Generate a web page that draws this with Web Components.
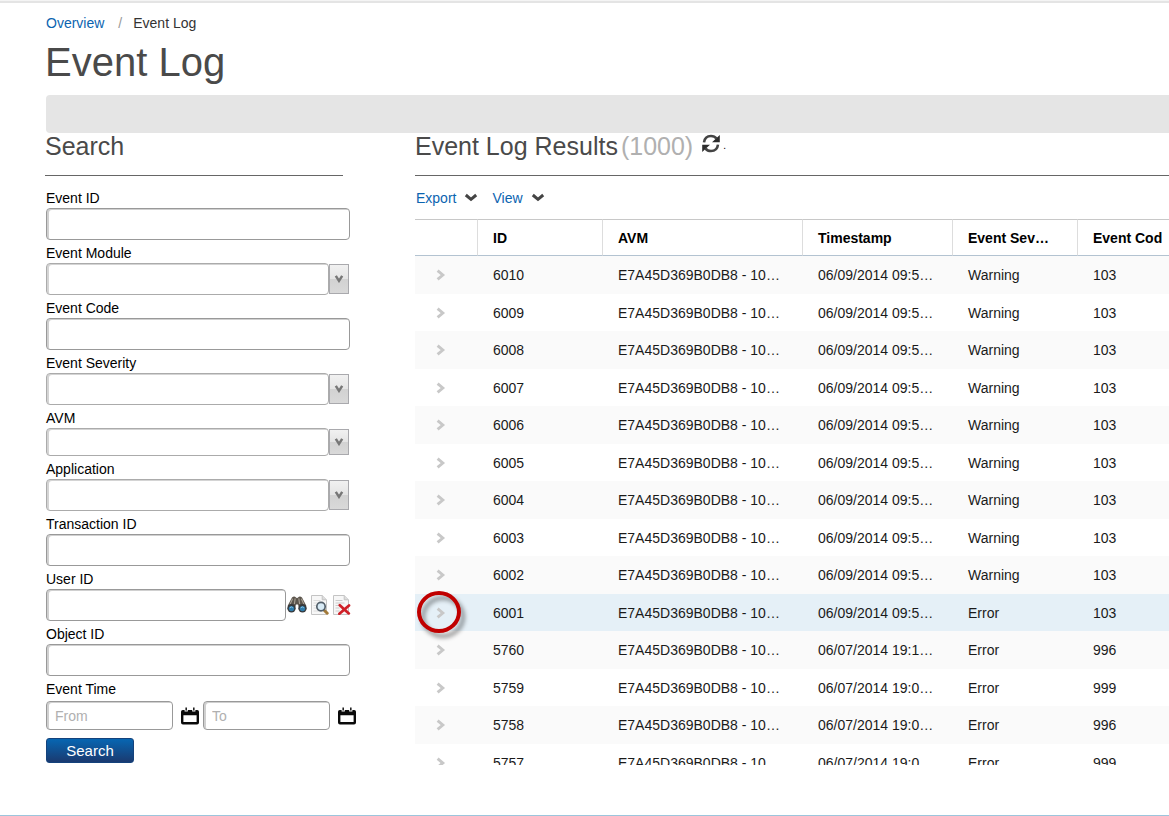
<!DOCTYPE html>
<html lang="en">
<head>
<meta charset="utf-8">
<title>Event Log</title>
<style>
  body { margin: 0; background: #fff; color: #1a1a1a; font: 14px/20px "Liberation Sans", Arial, sans-serif; overflow-x: hidden; }
</style>
</head>
<body>
<log-page>
  <page-heading slot="head" parent="Overview">Event Log</page-heading>
  <search-panel slot="side"></search-panel>
  <results-panel slot="main" total="1000"></results-panel>
</log-page>

<script>
const define = (name, html, setup) => {
  const template = document.createElement('template');
  template.innerHTML = html;
  customElements.define(name, class extends HTMLElement {
    constructor() {
      super();
      this.attachShadow({ mode: 'open' });
    }
    connectedCallback() {
      if (this.shadowRoot.childNodes.length) return;
      this.shadowRoot.append(template.content.cloneNode(true));
      if (setup) setup(this, this.shadowRoot);
    }
  });
};

/* ---- icons ---- */
const icons = {
  down: [14, 10, '<path d="M1.8 2 7 6.4 12.2 2" fill="none" stroke="#444" stroke-width="3"/>'],
  expand: [10, 12, '<path d="M1.6 1.6 6.8 6 1.6 10.4" fill="none" stroke="#c8c8c8" stroke-width="2.9"/>'],
  drop: [10, 8, '<path d="M1.8.8 5 5.8 8.2.8" fill="none" stroke="#777" stroke-width="2.5"/>'],
  refresh: [18, 19, '<g fill="none" stroke="#444" stroke-width="2.6"><path d="M2 8.4C2.6 4 5.6 2 9 2c2.4 0 4.2.8 5.4 2.4"/><path d="M16 10.6c-.6 4.4-3.6 6.4-7 6.4-2.4 0-4.2-.8-5.4-2.4"/></g><path d="M17.8 1V8.2H10ZM.2 18v-7.2h7.8Z" fill="#2c2c2c"/>'],
  calendar: [18, 18, '<path d="M1.8 3H3.6V4.6H6.8V3H11.2V4.6H14.4V3H16.2Q18 3 18 4.8V15.4Q18 17.4 16 17.4H2Q0 17.4 0 15.4V4.8Q0 3 1.8 3ZM2.4 8.2V15H15.6V8.2Z" fill="#0a0a0a"/><path d="M4.4.6h1.6v3H4.4ZM12 .6h1.6v3H12Z" fill="#222"/>'],
  binoculars: [20, 20, '<path d="M5 2.6Q7 .4 9 2.4L10 3.2 11 2.4Q13 .4 15 2.6L19.2 10.6 18 13H12.2L11 9.6H9L7.8 13H2L.8 10.6Z" fill="#5c554c"/><path d="M5.6 3.8 3 9.4M8.2 3.4 7.4 9M14.4 3.8 17 9.4M11.8 3.4 12.6 9" stroke="#aaa397" stroke-width="1.1" fill="none"/><circle cx="4.5" cy="13.2" r="4.2" fill="#38393b"/><circle cx="15.5" cy="13.2" r="4.2" fill="#38393b"/><circle cx="4.5" cy="13.6" r="2.7" fill="#2e7baa"/><circle cx="15.5" cy="13.6" r="2.7" fill="#2e7baa"/><path d="M2.8 12.8q1.6-1.8 3 0M13.8 12.8q1.6-1.8 3 0" stroke="#8ec5e4" fill="none"/>'],
  preview: [20, 20, '<path d="M2.5.5H13.2L17.5 4.8V19.5H2.5Z" fill="#f7f7f7" stroke="#c4c4c4"/><path d="M13.2.5V4.8H17.5" fill="#ddd" stroke="#c4c4c4"/><path d="M4.5 5.5h7M4.5 8h4M4.5 10.5h2.5M4.5 13h2.5M4.5 16h7" stroke="#ddd"/><path d="m15.2 15.2 3 3" stroke="#a27a39" stroke-width="3" stroke-linecap="round"/><circle cx="12" cy="11.6" r="4.2" fill="#d8ebf6" stroke="#53606b" stroke-width="1.7"/>'],
  clear: [20, 20, '<path d="M2.5.5H13.2L17.5 4.8V19.5H2.5Z" fill="#f7f7f7" stroke="#c4c4c4"/><path d="M13.2.5V4.8H17.5" fill="#ddd" stroke="#c4c4c4"/><path d="M4.5 5.5h7M4.5 8h9M4.5 10.5h4M4.5 13h4M4.5 16h4" stroke="#ccc"/><path d="m8.8 10.2 9 8.2M18 10.4l-9.6 8.4" stroke="#cf1f27" stroke-width="2.7" stroke-linecap="round"/>'],
};
define('ui-icon', `<style>:host{display:inline-flex;flex:none}svg{display:block}</style>`, (el, root) => {
  const [w, h, art] = icons[el.getAttribute('name')];
  root.innerHTML += `<svg width="${w}" height="${h}" viewBox="0 0 ${w} ${h}" aria-hidden="true">${art}</svg>`;
});

const control = `
  label { display: block; color: #000; }
  input { box-sizing: border-box; width: 100%; height: 32px; margin: 0; padding: 0 8px; border: 1px solid #999; border-radius: 4px;
    background: #fff; box-shadow: inset 2px 1px 0 #d0d0d0; font: inherit; outline-offset: 1px; display: block; min-width: 0; }
  input::placeholder { color: #b0b0b0; opacity: 1; }
  button { font: inherit; border: 0; background: none; padding: 0; margin: 0; cursor: pointer; display: flex; align-items: center; }`;

/* ---- labelled text box, with room for buttons beside it ---- */
define('text-field', `<style>${control}
  :host { display: block; }
  .row { display: flex; align-items: center; gap: 1px; }
</style><label for="box"></label><div class="row"><input id="box" type="text"><slot></slot></div>`, (el, root) => {
  root.querySelector('label').textContent = el.getAttribute('label');
});

/* ---- labelled drop-down ---- */
define('combo-field', `<style>${control}
  :host { display: block; --h: 32px; }
  :host([compact]) { --h: 28px; }
  .combo { display: grid; grid-template-columns: 1fr 20px; height: var(--h); margin-right: 1px; }
  .combo > * { grid-row: 1; box-sizing: border-box; }
  .face { grid-column: 1; border: 1px solid #ababab; border-radius: 4px; box-shadow: inset 2px 1px 0 #d4d4d4; }
  .arrow { grid-column: 2; margin: 1px 0; border: 1px solid #a9a9ad; display: flex; align-items: center; justify-content: center;
    background: linear-gradient(#f1f1f1, #e4e4e4 50%, #d2d2d2 50%, #d9d9d9); }
  select { grid-column: 1 / -1; appearance: none; width: 100%; border: 0; background: none; padding: 0 28px 0 8px; margin: 0; font: inherit; }
</style><label for="list"></label>
<div class="combo"><span class="face"></span><span class="arrow"><ui-icon name="drop"></ui-icon></span><select id="list"><option></option></select></div>`,
(el, root) => {
  root.querySelector('label').textContent = el.getAttribute('label');
});

/* ---- from / to range ---- */
define('time-range', `<style>${control}
  :host { display: block; }
  fieldset { border: 0; margin: 0; padding: 0; min-width: 0; }
  legend { padding: 0; color: #000; }
  .row { display: flex; gap: 4px; padding-top: 2px; }
  .date { display: flex; gap: 8px; flex: 1; }
  input { height: 29px; flex: 1; }
</style><fieldset><legend>Event Time</legend><div class="row">
  <div class="date"><input placeholder="From" aria-label="From"><button type="button" aria-label="Pick start date"><ui-icon name="calendar"></ui-icon></button></div>
  <div class="date"><input placeholder="To" aria-label="To"><button type="button" aria-label="Pick end date"><ui-icon name="calendar"></ui-icon></button></div>
</div></fieldset>`);

define('section-title', `<style>
  :host { display: block; border-bottom: 1px solid #666; padding-bottom: 16px; }
  .row { display: flex; height: 26px; }
  h2 { margin: 0; font-weight: 400; font-size: 25px; line-height: 26px; color: #4a4a4a; }
</style><div class="row"><h2><slot></slot></h2><slot name="extra"></slot></div>`);

define('search-panel', `<style>${control}
  :host { display: block; }
  section-title { margin-right: 13px; }
  form { display: flex; flex-direction: column; gap: 3px; padding: 12px 0 0 1px; }
  .fit { margin-right: 6px; }
  .tools { display: flex; gap: 2px; margin-right: -1px; }
  .tools button { width: 20px; }
  .go { align-self: flex-start; justify-content: center; width: 88px; height: 25px; margin-top: 5px; border: 1px solid #14427c; border-radius: 3px;
    background: linear-gradient(#0766b2, #1a3a70); color: #fff; font-size: 15px; line-height: 20px; }
</style>
<section-title>Search</section-title>
<form>
  <text-field class="fit" label="Event ID"></text-field>
  <combo-field class="fit" label="Event Module"></combo-field>
  <text-field class="fit" label="Event Code"></text-field>
  <combo-field class="fit" label="Event Severity"></combo-field>
  <combo-field class="fit" label="AVM" compact></combo-field>
  <combo-field class="fit" label="Application"></combo-field>
  <text-field class="fit" label="Transaction ID"></text-field>
  <text-field class="fit" label="User ID"><div class="tools">
    <button type="button" aria-label="Find user"><ui-icon name="binoculars"></ui-icon></button>
    <button type="button" aria-label="View user"><ui-icon name="preview"></ui-icon></button>
    <button type="button" aria-label="Clear user"><ui-icon name="clear"></ui-icon></button></div></text-field>
  <text-field class="fit" label="Object ID"></text-field>
  <time-range></time-range>
  <button class="go" type="button">Search</button>
</form>`);

/* ---- results ---- */
const avm = 'E7A45D369B0DB8 - 10…';
const rows = [6010, 6009, 6008, 6007, 6006, 6005, 6004, 6003, 6002].map(id => [id, avm, '06/09/2014 09:5…', 'Warning', 103]);
rows.push([6001, avm, '06/09/2014 09:5…', 'Error', 103], [5760, avm, '06/07/2014 19:1…', 'Error', 996],
  [5759, avm, '06/07/2014 19:0…', 'Error', 999], [5758, avm, '06/07/2014 19:0…', 'Error', 996], [5757, avm, '06/07/2014 19:0…', 'Error', 999]);

define('event-table', `<style>
  :host { display: block; overflow: hidden; max-height: calc(100vh - 270px); }
  table { width: 100%; table-layout: fixed; border-collapse: separate; border-spacing: 0; }
  col.open { width: 62px; } col.mid { width: 125px; } col.wide { width: 200px; } col.time { width: 150px; }
  th, td { box-sizing: border-box; padding: 0 0 0 16px; text-align: left; white-space: nowrap; vertical-align: middle; }
  th { height: 37px; color: #000; border-top: 1px solid #c8c8c8; border-bottom: 1px solid #b3c3d1; border-left: 1px solid #ddd; padding-left: 15px; }
  th:first-child { border-left: 0; }
  td { height: 37px; }
  tbody tr:nth-child(odd) td { background: #fafafa; height: 38px; }
  tbody tr.marked td { background: #e5f0f7; }
  td:first-child { padding-left: 21px; }
  tr.marked td:first-child { position: relative; z-index: 1; }
  button { display: flex; border: 0; background: none; padding: 0; cursor: pointer; }
  .ring { position: absolute; left: 2px; top: -3px; box-sizing: border-box; width: 44px; height: 42px; border: 4px solid #c00000; border-radius: 50%;
    filter: drop-shadow(4px 5px 2px rgba(0,0,0,.4)); pointer-events: none; }
</style>
<table><colgroup><col class="open"><col class="mid"><col class="wide"><col class="time"><col class="mid"><col></colgroup>
<thead><tr><th></th><th>ID</th><th>AVM</th><th>Timestamp</th><th>Event Sev…</th><th>Event Cod</th></tr></thead><tbody></tbody></table>`,
(el, root) => {
  root.querySelector('tbody').innerHTML = rows.map(r => {
    const marked = r[0] === 6001;
    return `<tr${marked ? ' class="marked"' : ''}><td><button type="button" aria-label="Expand ${r[0]}"><ui-icon name="expand"></ui-icon></button>${marked ? '<span class="ring"></span>' : ''}</td>${r.map(c => `<td>${c}</td>`).join('')}</tr>`;
  }).join('');
});

define('results-panel', `<style>
  :host { display: block; min-width: 0; }
  .count { color: #b0b0b0; margin-left: 3px; }
  button { display: flex; align-items: center; gap: 8px; border: 0; background: none; padding: 0; font: inherit; color: #0b64b0; cursor: pointer; }
  .extra { display: flex; align-items: flex-start; margin-left: 9px; gap: 3px; color: #000; font-size: 10px; line-height: 26px; }
  .extra button { padding-top: 1px; }
  .bar { display: flex; gap: 14px; padding: 12px 0 11px 1px; }
</style>
<section-title>Event Log Results<span class="count"></span><span class="extra" slot="extra"><button type="button" aria-label="Refresh"><ui-icon name="refresh"></ui-icon></button>.</span></section-title>
<div class="bar"><button type="button">Export <ui-icon name="down"></ui-icon></button><button type="button">View <ui-icon name="down"></ui-icon></button></div>
<event-table></event-table>`, (el, root) => {
  root.querySelector('.count').textContent = `(${el.getAttribute('total')})`;
});

/* ---- page frame ---- */
define('page-heading', `<style>
  :host { display: block; padding: 10px 0 0 45px; }
  nav { display: flex; gap: 11px; color: #333; padding-left: 1px; }
  a { color: #0b64b0; text-decoration: none; }
  .sep { color: #999; margin-left: 3px; }
  h1 { margin: 7px 0 11px; font-weight: 400; font-size: 40px; line-height: 44px; color: #4a4a4a; }
  .strip { height: 38px; margin-left: 1px; background: #e5e5e5; border-radius: 4px 0 0 4px; }
</style>
<nav><a href="#"></a><span class="sep">/</span><span class="here"></span></nav>
<h1><slot></slot></h1><div class="strip"></div>`, (el, root) => {
  root.querySelector('a').textContent = el.getAttribute('parent');
  root.querySelector('.here').textContent = el.textContent.trim();
});

define('log-page', `<style>
  :host { display: block; box-sizing: border-box; min-height: 100vh; border-bottom: 1px solid #9cc5dc; }
  .edge { height: 3px; background: linear-gradient(#f4f4f4 1px, #e4e4e4 1px); }
  .columns { display: grid; grid-template-columns: 311px minmax(0, 1fr); column-gap: 59px; padding-left: 45px; }
</style>
<div class="edge"></div><slot name="head"></slot><main class="columns"><slot name="side"></slot><slot name="main"></slot></main>`);
</script>
</body>
</html>
